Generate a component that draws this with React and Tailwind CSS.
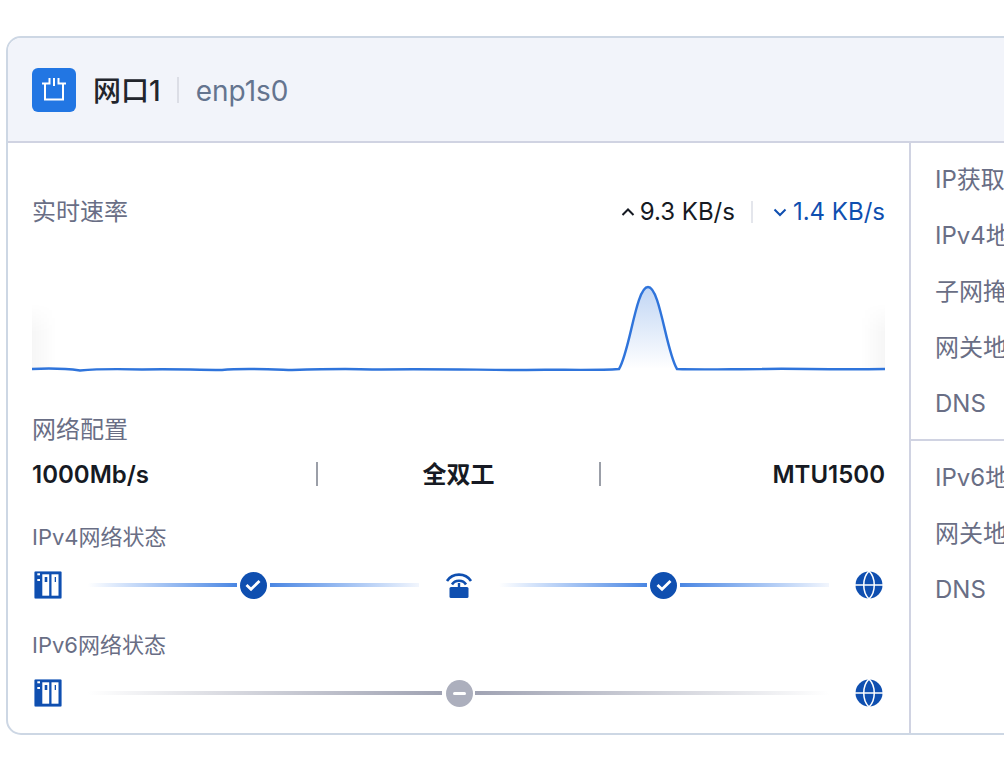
import React from 'react'

function ServerIcon() {
  return (
    <svg width="28" height="28" viewBox="0 0 28 28">
      <rect width="28" height="28" rx="1.5" fill="#d5e2f6" />
      <rect x="0.5" y="0.5" width="27" height="27" rx="1" fill="#0f4fb0" />
      <rect x="8.3" y="3.3" width="6.9" height="21.4" fill="#fff" />
      <rect x="17.5" y="3.3" width="7" height="21.4" fill="#fff" />
      <rect x="10.7" y="6" width="2.6" height="5" fill="#0f4fb0" />
      <rect x="20.7" y="6" width="1.3" height="5" fill="#0f4fb0" />
      <rect x="3.3" y="2.3" width="2.7" height="2" fill="#fff" />
      <rect x="3.3" y="8" width="2.7" height="2" fill="#fff" />
    </svg>
  )
}

function RouterIcon() {
  return (
    <svg width="28" height="28" viewBox="0 0 28 28">
      <path d="M2 10C7.5 1.500 20.500 1.500 26 10" fill="none" stroke="#0f4fb0" strokeWidth="2.6" />
      <path d="M7 13.500C10 8.500 18 8.500 21 13.500" fill="none" stroke="#0f4fb0" strokeWidth="2.6" />
      <rect x="12.8" y="12" width="2.4" height="5" fill="#0f4fb0" />
      <rect x="4.500" y="16" width="19" height="11" rx="1.5" fill="#0f4fb0" />
    </svg>
  )
}

function GlobeIcon() {
  return (
    <svg width="28" height="28" viewBox="0 0 28 28">
      <circle cx="14" cy="14" r="13.5" fill="#0f4fb0" />
      <path d="M0 14H28" stroke="#fff" strokeWidth="1.5" />
      <path d="M14 0C7 7 7 21 14 28C21 21 21 7 14 0Z" fill="none" stroke="#fff" strokeWidth="1.5" />
    </svg>
  )
}

function IconBox({ children }) {
  return <div className="w-[32px] h-[28px] flex items-center justify-center shrink-0">{children}</div>
}

function CheckBadge() {
  return (
    <div className="w-[33px] h-[28px] flex items-center justify-center shrink-0">
      <div className="w-[27px] h-[27px] rounded-full bg-[#0f4fb0] flex items-center justify-center">
        <svg width="16" height="16" viewBox="0 0 16 16">
          <path d="M1.5 8L6 12.2L14.5 4" fill="none" stroke="#fff" strokeWidth="2.8" />
        </svg>
      </div>
    </div>
  )
}

function MinusBadge() {
  return (
    <div className="w-[33px] h-[28px] flex items-center justify-center shrink-0">
      <div className="ml-[2px] w-[27px] h-[27px] rounded-full bg-[#acafbd] flex items-center justify-center">
        <div className="w-[13px] h-[3px] rounded-sm bg-white" />
      </div>
    </div>
  )
}

function Segment({ children }) {
  return <div className="flex-1 flex items-center">{children}</div>
}

function BlueLink() {
  return (
    <Segment>
      <div className="flex-1 h-[4px] bg-gradient-to-r from-[#ffffff] to-[#4a86e2]" />
      <CheckBadge />
      <div className="flex-1 h-[4px] bg-gradient-to-r from-[#4a86e2] to-[#f2f6fd]" />
    </Segment>
  )
}

function NetworkStatus({ label, children }) {
  return (
    <div>
      <div className="text-[22px] leading-[28px] text-[#696e85]">{label}</div>
      <div className="flex items-center mt-[20px] h-[28px] gap-[24px]">{children}</div>
    </div>
  )
}

function Chart() {
  const line =
    'M0 88C20 87 30 87 48 89.500C70 87.500 90 88 110 88.500C140 87.500 160 89 190 89C210 87 230 88 260 89C290 88 320 87.500 340 88.500C400 87.500 450 89 490 89C520 88 560 90 587 88C598 70 604 6 616 6C628 6 634 70 645 88C670 89 700 88 730 88C760 87 790 89 853 88'
  return (
    <svg width="853" height="120" viewBox="0 0 853 120" className="block">
      <defs>
        <linearGradient id="peak" x1="0" y1="0" x2="0" y2="1">
          <stop offset="0" stopColor="#2f74db" stopOpacity="0.3" />
          <stop offset="1" stopColor="#2f74db" stopOpacity="0" />
        </linearGradient>
        <linearGradient id="edgeL" x1="0" y1="0" x2="1" y2="0">
          <stop offset="0" stopColor="#000" stopOpacity="0.035" />
          <stop offset="1" stopColor="#000" stopOpacity="0" />
        </linearGradient>
        <linearGradient id="edgeR" x1="1" y1="0" x2="0" y2="0">
          <stop offset="0" stopColor="#000" stopOpacity="0.035" />
          <stop offset="1" stopColor="#000" stopOpacity="0" />
        </linearGradient>
        <linearGradient id="fadeTop" x1="0" y1="0" x2="0" y2="1">
          <stop offset="0" stopColor="#fff" stopOpacity="0" />
          <stop offset="0.45" stopColor="#fff" stopOpacity="1" />
        </linearGradient>
        <mask id="edgeMask">
          <rect x="0" y="22" width="853" height="66" fill="url(#fadeTop)" />
        </mask>
      </defs>
      <g mask="url(#edgeMask)">
        <rect x="0" y="22" width="24" height="66" fill="url(#edgeL)" />
        <rect x="829" y="22" width="24" height="66" fill="url(#edgeR)" />
      </g>
      <path d="M587 88C598 70 604 6 616 6C628 6 634 70 645 88Z" fill="url(#peak)" />
      <path d={line} fill="none" stroke="#2f74db" strokeWidth="2.4" />
    </svg>
  )
}

const ipRows1 = ['IP获取方式', 'IPv4地址', '子网掩码', '网关地址', 'DNS']
const ipRows2 = ['IPv6地址', '网关地址', 'DNS']

// faint rotated id text repeated over the page
function Watermark({ className }) {
  return (
    <div
      className={`absolute origin-top-left -rotate-45 text-[28px] leading-[40px] text-black/[0.016] pointer-events-none whitespace-nowrap ${className}`}
    >
      <div>9DA0326DF6</div>
      <div>BE50CAA3D2</div>
      <div>A85497E5D5</div>
      <div>67</div>
    </div>
  )
}

export default function App() {
  return (
    <div
      className="relative w-[1004px] h-[776px] overflow-hidden bg-white pt-[36px] pl-[6px]"
      style={{ fontFamily: 'Inter, "Noto Sans CJK SC", sans-serif' }}
    >
      <div className="w-[1100px] h-[699px] rounded-[15px] border-2 border-[#cdd7e4] overflow-hidden flex flex-col">
        <div className="h-[105px] shrink-0 bg-[#f2f4fa] border-b-2 border-[#d0d3e2] flex items-center pl-[24px]">
          <div className="w-[44px] h-[44px] rounded-[6px] bg-[#2276e3] flex items-center justify-center">
            <svg width="24" height="24" viewBox="0 0 24 24">
              <path
                d="M3 5.5V21.500H21V5.500M0 5.500H7.500V0M12 0V8M16.500 0V5.500H24"
                fill="none"
                stroke="#fff"
                strokeWidth="2"
              />
            </svg>
          </div>
          <div className="ml-[17px] mt-[3px] text-[28px] font-medium text-[#22252c]">网口1</div>
          <div className="w-[2px] h-[26px] bg-[#dcdee6] ml-[16px]" />
          <div className="ml-[17px] mt-[3px] text-[28px] text-[#64748f]">enp1s0</div>
        </div>
        <div className="flex-1 flex min-h-0">
          <div className="w-[901px] shrink-0 pl-[24px] pr-[24px] pt-[55px]">
            <div className="flex items-center justify-between h-[28px] text-[24px]">
              <div className="text-[#696e85]">实时速率</div>
              <div className="flex items-center">
                <svg width="16" height="16" viewBox="0 0 16 16" className="mr-[4px]">
                  <path d="M2.5 11L8 5.5L13.5 11" fill="none" stroke="#161a23" strokeWidth="2" />
                </svg>
                <span className="text-[#161a23]">9.3 KB/s</span>
                <div className="w-[2px] h-[22px] bg-[#e4e6ec] ml-[16px] mr-[19px]" />
                <svg width="16" height="16" viewBox="0 0 16 16" className="mr-[5px]">
                  <path d="M2.5 5.500L8 11L13.500 5.500" fill="none" stroke="#0f4fb0" strokeWidth="2" />
                </svg>
                <span className="text-[#0f4fb0]">1.4 KB/s</span>
              </div>
            </div>
            <div className="mt-[55px]">
              <Chart />
            </div>
            <div className="mt-[12px] text-[24px] leading-[34px] text-[#696e85]">网络配置</div>
            <div className="grid grid-cols-3 h-[30px] mt-[13px] text-[24px] leading-[30px] font-semibold text-[#161a23]">
              <div>1000Mb/s</div>
              <div className="relative text-center">
                <div className="absolute left-0 top-[2px] w-[2px] h-[24px] bg-[#9b9fa8]" />
                全双工
                <div className="absolute right-0 top-[2px] w-[2px] h-[24px] bg-[#9b9fa8]" />
              </div>
              <div className="text-right">MTU1500</div>
            </div>
            <div className="mt-[33px]">
              <NetworkStatus label="IPv4网络状态">
                <IconBox><ServerIcon /></IconBox>
                <BlueLink />
                <IconBox><RouterIcon /></IconBox>
                <BlueLink />
                <IconBox><GlobeIcon /></IconBox>
              </NetworkStatus>
            </div>
            <div className="mt-[32px]">
              <NetworkStatus label="IPv6网络状态">
                <IconBox><ServerIcon /></IconBox>
                <Segment>
                  <div className="flex-1 h-[4px] bg-gradient-to-r from-[#ffffff] to-[#a0a3b3]" />
                  <MinusBadge />
                  <div className="flex-1 h-[4px] bg-gradient-to-r from-[#a0a3b3] to-[#ffffff]" />
                </Segment>
                <IconBox><GlobeIcon /></IconBox>
              </NetworkStatus>
            </div>
          </div>
          <div className="flex-1 border-l-2 border-[#d0d3e2] text-[24px] text-[#696e85]">
            <div className="h-[298px] pl-[24px] border-b-2 border-[#d0d3e2] pt-[22px] flex flex-col gap-[26px]">
              {ipRows1.map((r, i) => (
                <div key={i} className="h-[30px] leading-[30px]">{r}</div>
              ))}
            </div>
            <div className="pl-[24px] pt-[22px] flex flex-col gap-[26px]">
              {ipRows2.map((r, i) => (
                <div key={i} className="h-[30px] leading-[30px]">{r}</div>
              ))}
            </div>
          </div>
        </div>
      </div>
      <Watermark className="left-[9px] top-[309px]" />
      <Watermark className="left-[553px] top-[289px]" />
      <Watermark className="left-[289px] top-[33px]" />
      <Watermark className="left-[833px] top-[13px]" />
      <Watermark className="left-[269px] top-[565px]" />
      <Watermark className="left-[813px] top-[545px]" />
      <Watermark className="left-[-11px] top-[841px]" />
      <Watermark className="left-[533px] top-[821px]" />
    </div>
  )
}
